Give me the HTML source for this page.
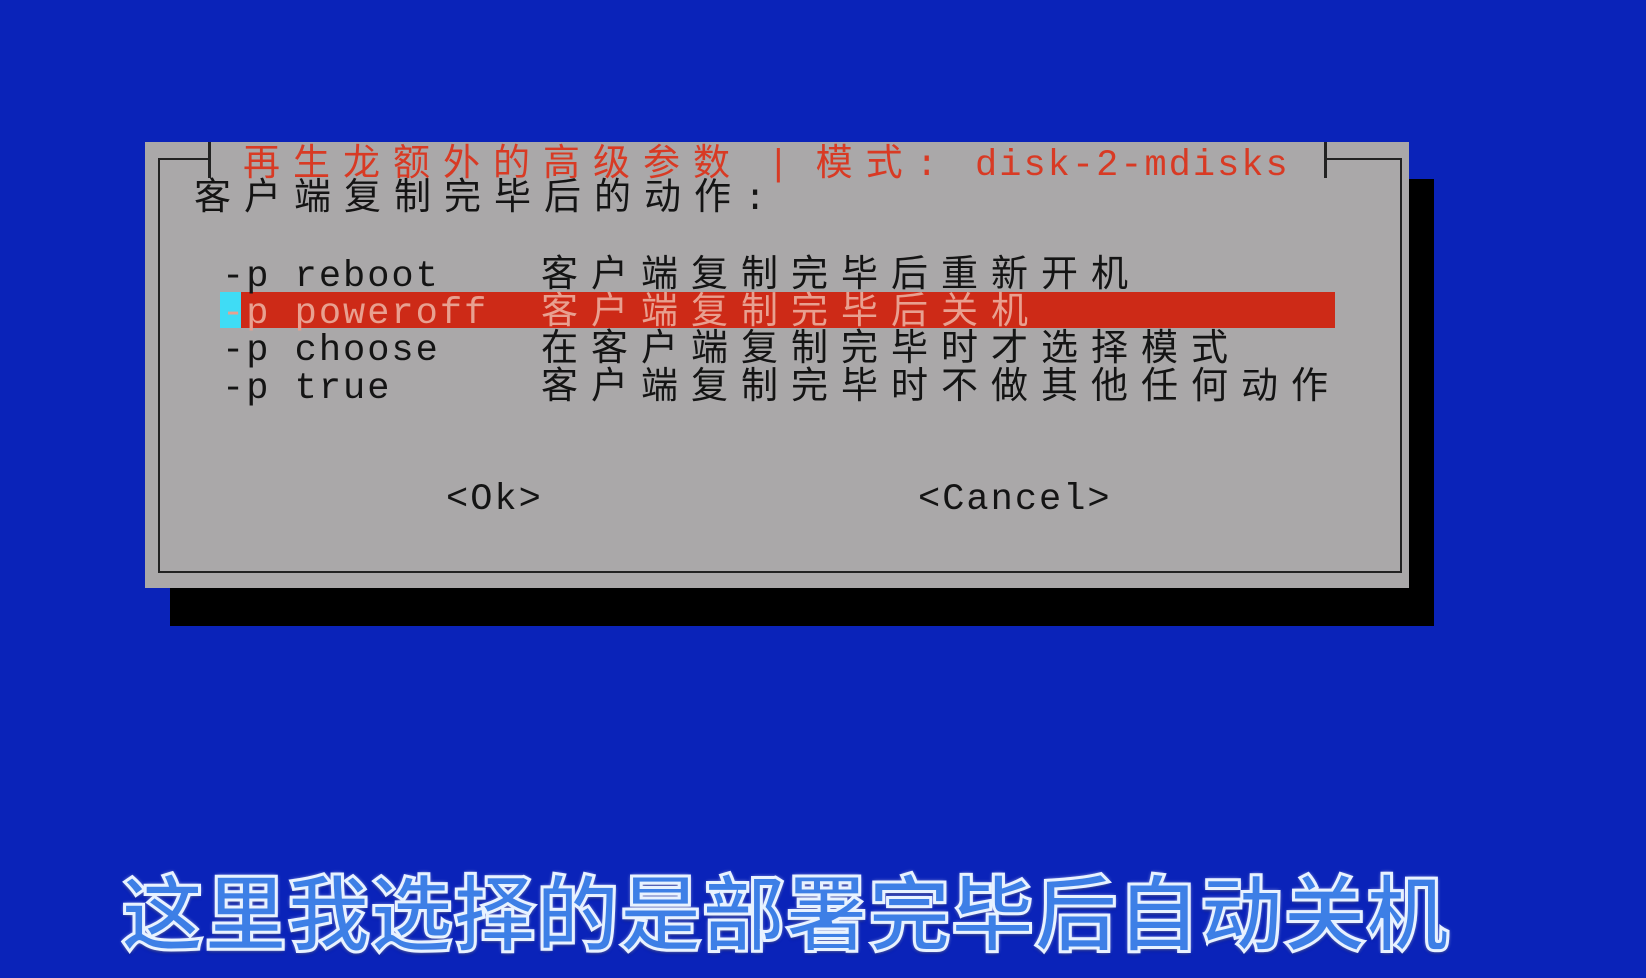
<!DOCTYPE html>
<html><head><meta charset="utf-8"><style>
html,body{margin:0;padding:0}
body{width:1646px;height:978px;background:#0a23b9;position:relative;overflow:hidden;font-family:"Liberation Mono","WenQuanYi Zen Hei","Noto Sans CJK SC",monospace}
.a{position:absolute}
.t{position:absolute;font-size:37px;line-height:40px;white-space:pre;letter-spacing:2px;color:#141414}
.c{letter-spacing:13px}
</style></head><body>
<div class="a" style="left:170px;top:179px;width:1264px;height:447px;background:#000"></div>
<div class="a" style="left:145px;top:142px;width:1264px;height:446px;background:#aaa8a9"></div>
<div class="a" style="left:158px;top:158px;width:1240px;height:411px;border:2px solid #222"></div>
<div class="a" style="left:210px;top:150px;width:1116px;height:14px;background:#aaa8a9"></div>
<div class="a" style="left:208px;top:142px;width:3px;height:36px;background:#222"></div>
<div class="a" style="left:1324px;top:142px;width:3px;height:36px;background:#222"></div>
<div class="t" style="left:243px;top:146px;color:#d83a24"><span class="c">再生龙额外的高级参数</span> | <span class="c">模式:</span> disk-2-mdisks</div>
<div class="t" style="left:194px;top:180px"><span class="c">客户端复制完毕后的动作:</span></div>
<div class="a" style="left:241px;top:292px;width:1094px;height:36px;background:#cd2a17"></div>
<div class="a" style="left:220px;top:292px;width:21px;height:36px;background:#3fdcf5"></div>
<div class="t" style="left:222px;top:257px">-p reboot</div>
<div class="t" style="left:541px;top:257px"><span class="c">客户端复制完毕后重新开机</span></div>
<div class="t" style="left:222px;top:294px;color:#e8a090">-p poweroff</div>
<div class="t" style="left:541px;top:294px;color:#e8a090"><span class="c">客户端复制完毕后关机</span></div>
<div class="t" style="left:222px;top:331px">-p choose</div>
<div class="t" style="left:541px;top:331px"><span class="c">在客户端复制完毕时才选择模式</span></div>
<div class="t" style="left:222px;top:369px">-p true</div>
<div class="t" style="left:541px;top:369px"><span class="c">客户端复制完毕时不做其他任何动作</span></div>
<div class="t" style="left:446px;top:480px">&lt;Ok&gt;</div>
<div class="t" style="left:918px;top:480px">&lt;Cancel&gt;</div>
<div class="a" style="left:121px;top:860px;font-family:'WenQuanYi Zen Hei','Noto Sans CJK SC',sans-serif;font-weight:bold;font-size:83px;line-height:96px;letter-spacing:0;color:#3d7fe6;-webkit-text-stroke:3px #e8f2ff;text-shadow:0 0 4px #fff,0 3px 3px #0a1a80;white-space:nowrap">这里我选择的是部署完毕后自动关机</div>
</body></html>
